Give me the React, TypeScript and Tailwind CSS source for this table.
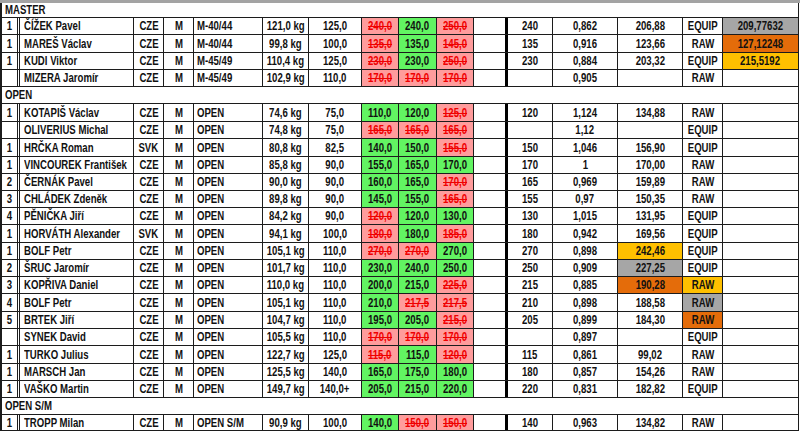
import React from "react";

type Kind = "" | "g" | "r" | "gold" | "gray" | "or";
type C = [string, Kind?];

type Data = {
  h: 17 | 18;
  rank: string;
  name: string;
  cty: string;
  div: string;
  bw: string;
  op: string;
  a: C[];
  best: string;
  coef: string;
  score: C;
  type: C;
  fin: C;
};

const kindCls = (k?: Kind) => {
  switch (k) {
    case "g":
      return "bg-[#62f462]";
    case "r":
      return "bg-[#ff9c9c] text-[#f00000] line-through decoration-[#f00000]";
    case "gold":
      return "bg-[#ffc000]";
    case "gray":
      return "bg-[#a6a6a6]";
    case "or":
      return "bg-[#e46c0a]";
    default:
      return "";
  }
};

const d = (
  h: 17 | 18,
  rank: string,
  name: string,
  cty: string,
  div: string,
  bw: string,
  op: string,
  a: C[],
  best: string,
  coef: string,
  score: C,
  type: C,
  fin: C = [""]
): Data => ({ h, rank, name, cty, div, bw, op, a, best, coef, score, type, fin });

type Block = { title: string; h: 14 | 17; top: boolean; rows: Data[] };

const blocks: Block[] = [
  {
    title: "MASTER",
    h: 14,
    top: false,
    rows: [
      d(17, "1", "ČÍŽEK Pavel", "CZE", "M-40/44", "121,0 kg", "125,0", [["240,0", "r"], ["240,0", "g"], ["250,0", "r"]], "240", "0,862", ["206,88"], ["EQUIP"], ["209,77632", "gray"]),
      d(18, "1", "MAREŠ Václav", "CZE", "M-40/44", "99,8 kg", "100,0", [["135,0", "r"], ["135,0", "g"], ["145,0", "r"]], "135", "0,916", ["123,66"], ["RAW"], ["127,12248", "or"]),
      d(17, "1", "KUDI Viktor", "CZE", "M-45/49", "110,4 kg", "125,0", [["230,0", "r"], ["230,0", "g"], ["250,0", "r"]], "230", "0,884", ["203,32"], ["EQUIP"], ["215,5192", "gold"]),
      d(17, "", "MIZERA Jaromír", "CZE", "M-45/49", "102,9 kg", "110,0", [["170,0", "r"], ["170,0", "r"], ["170,0", "r"]], "", "0,905", [""], ["RAW"]),
    ],
  },
  {
    title: "OPEN",
    h: 17,
    top: true,
    rows: [
      d(18, "1", "KOTAPIŠ Václav", "CZE", "OPEN", "74,6 kg", "75,0", [["110,0", "g"], ["120,0", "g"], ["125,0", "r"]], "120", "1,124", ["134,88"], ["RAW"]),
      d(17, "", "OLIVERIUS Michal", "CZE", "OPEN", "74,8 kg", "75,0", [["165,0", "r"], ["165,0", "r"], ["165,0", "r"]], "", "1,12", [""], ["EQUIP"]),
      d(18, "1", "HRČKA Roman", "SVK", "OPEN", "80,8 kg", "82,5", [["140,0", "g"], ["150,0", "g"], ["155,0", "r"]], "150", "1,046", ["156,90"], ["EQUIP"]),
      d(17, "1", "VINCOUREK František", "CZE", "OPEN", "85,8 kg", "90,0", [["155,0", "g"], ["165,0", "g"], ["170,0", "g"]], "170", "1", ["170,00"], ["RAW"]),
      d(17, "2", "ČERNÁK Pavel", "CZE", "OPEN", "90,0 kg", "90,0", [["160,0", "g"], ["165,0", "g"], ["170,0", "r"]], "165", "0,969", ["159,89"], ["RAW"]),
      d(17, "3", "CHLÁDEK Zdeněk", "CZE", "OPEN", "89,8 kg", "90,0", [["145,0", "g"], ["155,0", "g"], ["165,0", "r"]], "155", "0,97", ["150,35"], ["RAW"]),
      d(17, "4", "PĚNIČKA Jiří", "CZE", "OPEN", "84,2 kg", "90,0", [["120,0", "r"], ["120,0", "g"], ["130,0", "g"]], "130", "1,015", ["131,95"], ["EQUIP"]),
      d(18, "1", "HORVÁTH Alexander", "SVK", "OPEN", "94,1 kg", "100,0", [["180,0", "r"], ["180,0", "g"], ["185,0", "r"]], "180", "0,942", ["169,56"], ["EQUIP"]),
      d(17, "1", "BOLF Petr", "CZE", "OPEN", "105,1 kg", "110,0", [["270,0", "r"], ["270,0", "r"], ["270,0", "g"]], "270", "0,898", ["242,46", "gold"], ["EQUIP"]),
      d(17, "2", "ŠRUC Jaromír", "CZE", "OPEN", "101,7 kg", "110,0", [["230,0", "g"], ["240,0", "g"], ["250,0", "g"]], "250", "0,909", ["227,25", "gray"], ["EQUIP"]),
      d(17, "3", "KOPŘIVA Daniel", "CZE", "OPEN", "110,0 kg", "110,0", [["200,0", "g"], ["215,0", "g"], ["225,0", "r"]], "215", "0,885", ["190,28", "or"], ["RAW", "gold"]),
      d(18, "4", "BOLF Petr", "CZE", "OPEN", "105,1 kg", "110,0", [["210,0", "g"], ["217,5", "r"], ["217,5", "r"]], "210", "0,898", ["188,58"], ["RAW", "gray"]),
      d(17, "5", "BRTEK Jiří", "CZE", "OPEN", "104,7 kg", "110,0", [["195,0", "g"], ["205,0", "g"], ["215,0", "r"]], "205", "0,899", ["184,30"], ["RAW", "or"]),
      d(17, "", "SYNEK David", "CZE", "OPEN", "105,5 kg", "110,0", [["170,0", "r"], ["170,0", "r"], ["170,0", "r"]], "", "0,897", [""], ["EQUIP"]),
      d(18, "1", "TURKO Julius", "CZE", "OPEN", "122,7 kg", "125,0", [["115,0", "r"], ["115,0", "g"], ["120,0", "r"]], "115", "0,861", ["99,02"], ["RAW"]),
      d(17, "1", "MARSCH Jan", "CZE", "OPEN", "125,5 kg", "140,0", [["165,0", "g"], ["175,0", "g"], ["180,0", "g"]], "180", "0,857", ["154,26"], ["RAW"]),
      d(17, "1", "VAŠKO Martin", "CZE", "OPEN", "149,7 kg", "140,0+", [["205,0", "g"], ["215,0", "g"], ["220,0", "g"]], "220", "0,831", ["182,82"], ["EQUIP"]),
    ],
  },
  {
    title: "OPEN S/M",
    h: 17,
    top: true,
    rows: [
      d(17, "1", "TROPP Milan", "CZE", "OPEN S/M", "90,9 kg", "100,0", [["140,0", "g"], ["150,0", "r"], ["150,0", "r"]], "140", "0,963", ["134,82"], ["RAW"]),
    ],
  },
];

const cell = "flex items-center justify-center border-l border-[#1c1c1c] shrink-0";

function T({ children, left }: { children: React.ReactNode; left?: boolean }) {
  return (
    <span
      className={`inline-block whitespace-nowrap scale-x-[0.8] ${left ? "origin-left" : "origin-center"}`}
    >
      {children}
    </span>
  );
}

function Row({ r, last }: { r: Data; last: boolean }) {
  return (
    <div
      className={`flex border-t border-[#1c1c1c] ${r.h === 18 ? "h-[18px]" : "h-[17px]"} ${
        last ? "border-b" : ""
      }`}
    >
      <div className="w-[18px] shrink-0 flex items-center justify-center border-r-[3px] border-double border-[#1c1c1c]">
        <T>{r.rank}</T>
      </div>
      <div className="w-[113px] shrink-0 flex items-center pl-[4px] overflow-visible">
        <T left>{r.name}</T>
      </div>
      <div className={`${cell} w-[30px]`}>
        <T>{r.cty}</T>
      </div>
      <div className={`${cell} w-[30px]`}>
        <T>M</T>
      </div>
      <div className={`${cell} w-[69px] !justify-start pl-[3px]`}>
        <T left>{r.div}</T>
      </div>
      <div className={`${cell} w-[46px]`}>
        <T>{r.bw}</T>
      </div>
      <div className={`${cell} w-[53px]`}>
        <T>{r.op}</T>
      </div>
      <div className={`${cell} w-[37px] ${kindCls(r.a[0][1])}`}>
        <T>{r.a[0][0]}</T>
      </div>
      <div className={`${cell} w-[38px] ${kindCls(r.a[1][1])}`}>
        <T>{r.a[1][0]}</T>
      </div>
      <div className={`${cell} w-[37px] ${kindCls(r.a[2][1])}`}>
        <T>{r.a[2][0]}</T>
      </div>
      <div className={`${cell} w-[32px]`}></div>
      <div className={`${cell} w-[47px] !border-l-[3px] !border-black`}>
        <T>{r.best}</T>
      </div>
      <div className={`${cell} w-[65px]`}>
        <T>{r.coef}</T>
      </div>
      <div className={`${cell} w-[65px] ${kindCls(r.score[1])}`}>
        <T>{r.score[0]}</T>
      </div>
      <div className={`${cell} w-[40px] ${kindCls(r.type[1])}`}>
        <T>{r.type[0]}</T>
      </div>
      <div className={`${cell} w-[76px] ${kindCls(r.fin[1])}`}>
        <T>{r.fin[0]}</T>
      </div>
    </div>
  );
}

export default function App() {
  const all = blocks.length;
  return (
    <div className="w-[800px] h-[432px] overflow-hidden bg-white text-[12px] leading-none font-bold text-[#111] font-['Liberation_Sans',Arial,sans-serif]">
      <div className="h-[3px] w-full bg-[#a3a3a3]" />
      <div className="w-[799px] border-l-2 border-r border-[#1c1c1c]">
        {blocks.map((b, bi) => (
          <div key={b.title}>
            <div
              className={`flex items-center pl-[3px] ${b.h === 14 ? "h-[14px]" : "h-[17px]"} ${
                b.top ? "border-t border-[#1c1c1c]" : ""
              }`}
            >
              <T left>{b.title}</T>
            </div>
            {b.rows.map((r, i) => (
              <Row key={i} r={r} last={bi === all - 1 && i === b.rows.length - 1} />
            ))}
          </div>
        ))}
      </div>
    </div>
  );
}
